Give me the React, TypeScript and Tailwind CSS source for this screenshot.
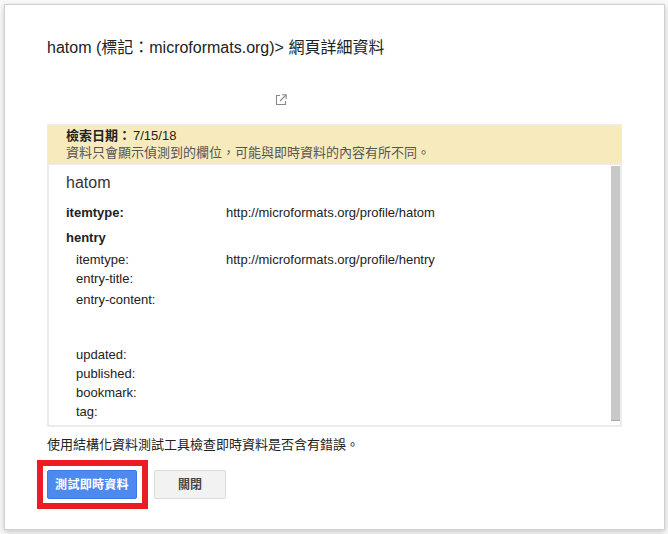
const FONT = "font-['Liberation_Sans','Noto_Sans_CJK_TC',sans-serif]";

type Row = { label: string; value?: string; rowClass: string };

const ROWS: Row[] = [
  { label: "itemtype:", value: "http://microformats.org/profile/hentry", rowClass: "h-[19px]" },
  { label: "entry-title:", rowClass: "h-[19px]" },
  { label: "entry-content:", rowClass: "h-[57px] pt-[2px]" },
  { label: "updated:", rowClass: "h-[19px]" },
  { label: "published:", rowClass: "h-[19px]" },
  { label: "bookmark:", rowClass: "h-[19px]" },
  { label: "tag:", rowClass: "h-[19px]" },
];

function OpenInNew() {
  return (
    <svg width="12" height="12" viewBox="0 0 12 12" fill="none" stroke="#8a8a8a" strokeWidth="1.1">
      <path d="M5 1.5H1.5v9h9V7" />
      <path d="M7 .8h4.2V5" />
      <path d="M11 1 5 7" />
    </svg>
  );
}

export default function App() {
  return (
    <div className={`${FONT} w-[668px] h-[534px] overflow-hidden bg-[#f9f9f9] pt-[4px] pl-[4px]`}>
      <div className="relative w-[661px] h-[526px] bg-white border border-[#d0d0d0] shadow-[0_2px_6px_rgba(0,0,0,0.2)] pl-[42px] pr-[42px] flex flex-col">
        <div className="h-[87px] pt-[33px] text-[16px] leading-[20px] text-[#222] whitespace-nowrap">
          hatom (標記：microformats.org)&gt; 網頁詳細資料
        </div>
        <div className="h-[32px] pl-[228px] pt-[2px]">
          <OpenInNew />
        </div>

        <div className="h-[41px] bg-[#f7ebbd] border border-[#ececec] pl-[18px] pt-[2px] text-[13px] leading-[17px] text-[#333]">
          <div className="text-[#222]">
            <span className="font-bold mr-[2px]">檢索日期：</span>7/15/18
          </div>
          <div className="text-[#555]">資料只會顯示偵測到的欄位，可能與即時資料的內容有所不同。</div>
        </div>

        <div className="h-[262px] border-2 border-t-0 border-[#ececec] flex text-[#222]">
          <div className="flex-1 pl-[17px] text-[13px] leading-[19px]">
            <div className="h-[36px] pt-[8px] text-[16px] leading-[20px] text-[#333]">hatom</div>
            <div className="flex h-[25px] pt-[2px]">
              <span className="w-[160px] font-bold">itemtype:</span>
              <span>http://microformats.org/profile/hatom</span>
            </div>
            <div className="h-[24px] pt-[2px] font-bold">hentry</div>
            <div className="pl-[10px]">
              {ROWS.map((row) => (
                <div key={row.label} className={`flex ${row.rowClass}`}>
                  <span className="w-[150px]">{row.label}</span>
                  {row.value && <span>{row.value}</span>}
                </div>
              ))}
            </div>
          </div>
          <div className="w-[9px] h-[255px] mt-[1px] bg-[#c8c8c8] border-b border-[#a8a8a8]" />
        </div>

        <div className="h-[43px] pt-[9px] text-[13px] leading-[18px] text-[#222] whitespace-nowrap">
          使用結構化資料測試工具檢查即時資料是否含有錯誤。
        </div>

        <div className="flex gap-[17px]">
          <button className="w-[90px] h-[29px] bg-[#4d8af0] border border-[#3b78e7] rounded-[2px] text-white text-[12px] tracking-[0.3px] font-bold">
            測試即時資料
          </button>
          <button className="w-[72px] h-[29px] bg-[#f2f2f2] border border-[#dcdcdc] rounded-[2px] text-[#444] text-[12px] font-bold">
            關閉
          </button>
        </div>

        <div className="absolute left-[32px] top-[455px] w-[111px] h-[49px] border-[6px] border-[#ed1c24] pointer-events-none" />
      </div>
    </div>
  );
}
